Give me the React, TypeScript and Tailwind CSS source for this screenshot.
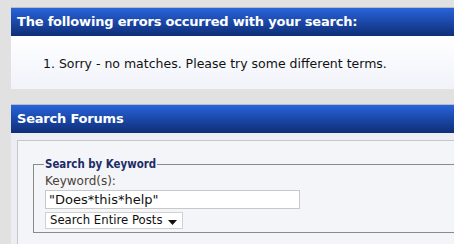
import React from "react";

const V = { fontFamily: '"DejaVu Sans", Verdana, sans-serif' };
const C = { fontFamily: '"DejaVu Sans Condensed", "DejaVu Sans", Tahoma, sans-serif' };

export default function App() {
  return (
    <div className="w-[454px] h-[244px] overflow-hidden bg-[#e1e1e1] pt-[7px] pl-[11px]" style={V}>
      <div className="w-[460px] border-t border-[#b9bcc4]">
        <div className="h-[28px] bg-gradient-to-b from-[#2864da] to-[#0f2e78] flex items-center pl-[6px]">
          <span className="text-white font-bold text-[13px] tracking-[-0.2px]">The following errors occurred with your search:</span>
        </div>
        <div className="h-[53px] bg-gradient-to-b from-white to-[#f1f3fa] border-b border-[#f4f4f4] pl-[32px] pt-[15px]">
          <span className="text-[12.5px] text-[#111]">1. Sorry - no matches. Please try some different terms.</span>
        </div>
      </div>

      <div className="w-[460px] mt-[15px] border-t border-[#b9bcc4]">
        <div className="h-[28px] bg-gradient-to-b from-[#2864da] to-[#0f2e78] flex items-center pl-[6px]">
          <span className="text-white font-bold text-[13px] tracking-[-0.2px]">Search Forums</span>
        </div>
        <div className="bg-[#eceef4] pt-[7px] pl-[6px] h-[120px]">
          <div className="border-t border-l border-[#c4c6cc] bg-[#f4f5f9] pt-[15px] pl-[15px] h-[120px]">
            <fieldset className="border border-[#8a8a8a] pl-[11px] h-[77px]">
              <legend className="text-[11.4px] font-bold text-[#1d2c66] px-[1px] ml-[-1px]" style={C}>Search by Keyword</legend>
              <div className="text-[12px] text-[#4b3f35] leading-[14px] mt-[1px]">Keyword(s):</div>
              <div className="mt-[2px] w-[255px] h-[19px] bg-white border border-[#c8c8c8] flex items-center pl-[3px] text-[13px] text-[#111]">"Does*this*help"</div>
              <div className="mt-[3px] w-[138px] h-[17px] bg-white border border-[#d0d0d0] flex items-center pl-[4px] text-[11.7px] text-[#111]">
                <span>Search Entire Posts</span>
                <svg width="9" height="5" viewBox="0 0 9 5" className="ml-auto mr-[5px] mt-[3px]"><path d="M0 0h9L4.5 5z" fill="#111" /></svg>
              </div>
            </fieldset>
          </div>
        </div>
      </div>
    </div>
  );
}
